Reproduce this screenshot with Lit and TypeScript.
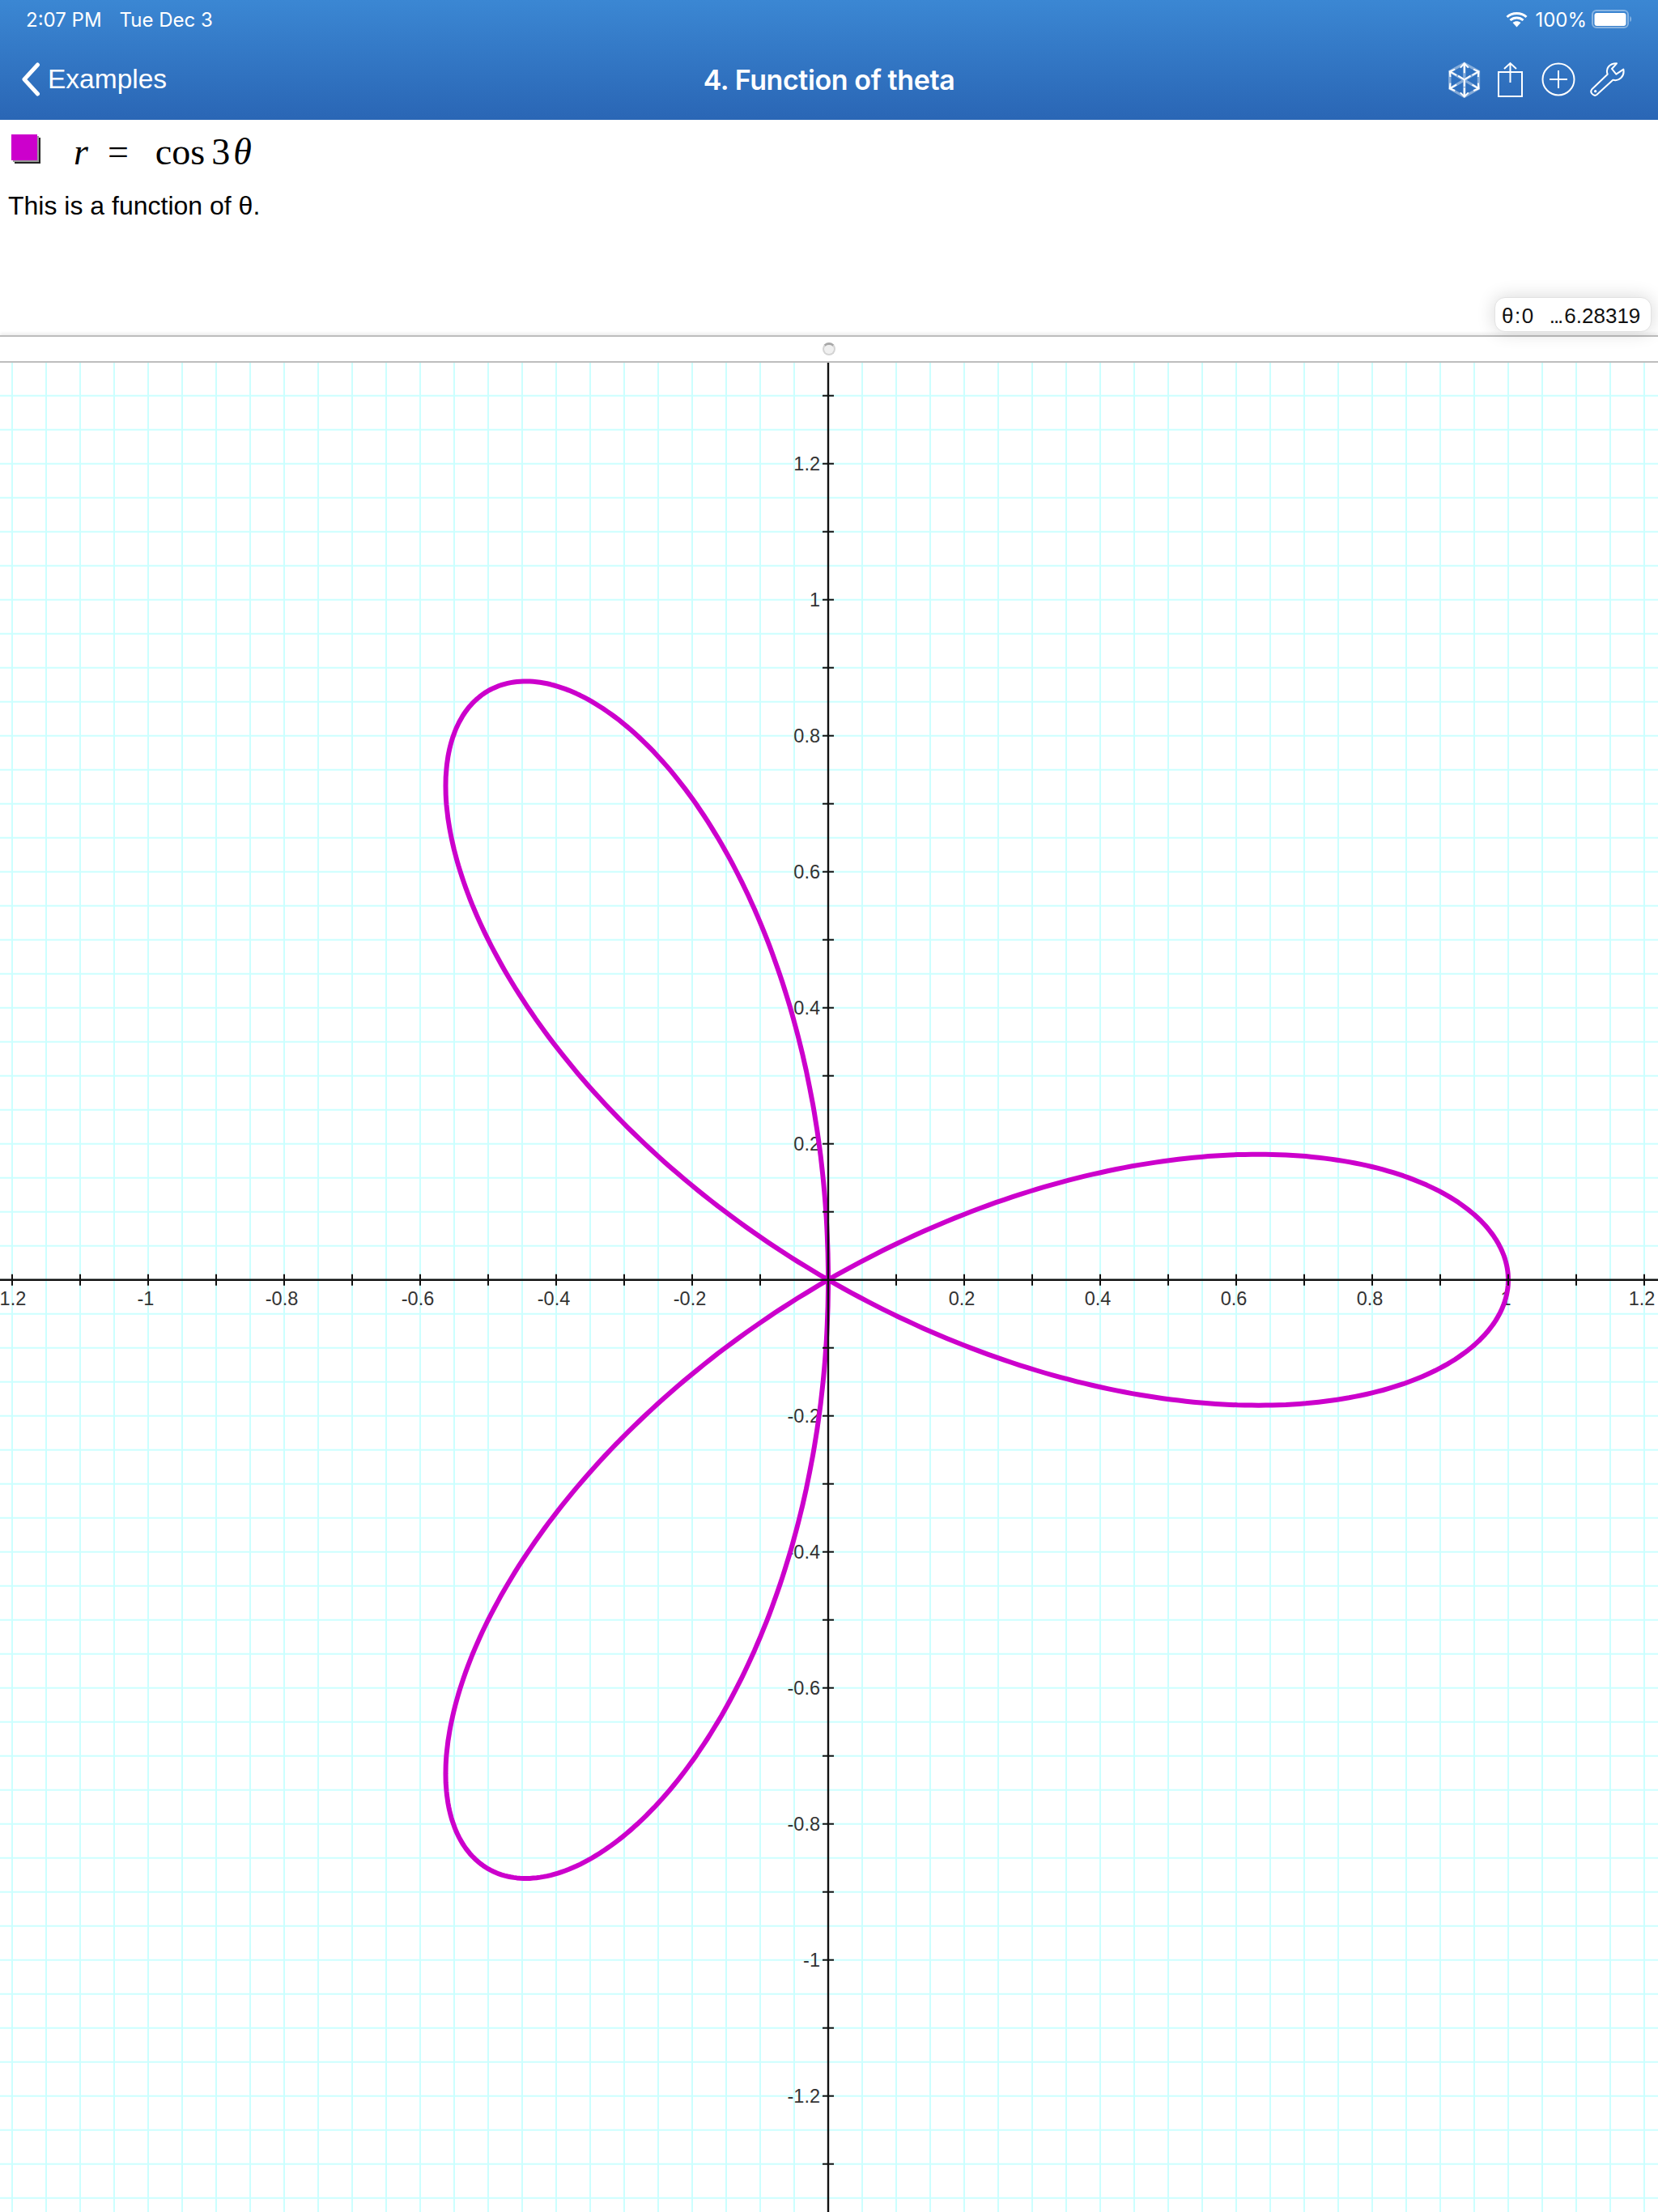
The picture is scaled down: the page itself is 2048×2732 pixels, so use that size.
import { LitElement, html, css, svg } from 'lit'
import { customElement } from 'lit/decorators.js'

const OX = 1023
const OY = 1580.7
const UNIT = 840
const STEP = UNIT / 20

function range(from: number, to: number) {
  const out: number[] = []
  for (let i = from; i <= to; i++) out.push(i)
  return out
}

function rose() {
  const pts: string[] = []
  for (let i = 0; i <= 720; i++) {
    const t = (i / 720) * Math.PI
    const r = Math.cos(3 * t)
    pts.push(`${(OX + UNIT * r * Math.cos(t)).toFixed(1)},${(OY - UNIT * r * Math.sin(t)).toFixed(1)}`)
  }
  return pts.join(' ')
}

function label(n: number) {
  return String(Math.round(n * 10) / 10)
}

@customElement('app-root')
export class AppRoot extends LitElement {
  static styles = css`
    :host {
      display: block;
      width: 2048px;
      height: 2732px;
      overflow: hidden;
      background: #fff;
      font-family: 'Liberation Sans', Arial, sans-serif;
    }
    .header {
      height: 148px;
      box-sizing: border-box;
      color: #fff;
      background: linear-gradient(#3b87d3, #2a66b5);
      font-family: Inter, 'Liberation Sans', sans-serif;
    }
    .status {
      height: 48px;
      padding: 0 32px 0 32px;
      display: flex;
      align-items: center;
      justify-content: space-between;
      font-size: 24px;
    }
    .status .left {
      display: flex;
      gap: 22px;
    }
    .status .right {
      display: flex;
      align-items: center;
    }
    .pct {
      margin: 0 6px 0 9px;
    }
    .nav {
      height: 100px;
      display: grid;
      grid-template-columns: 1fr auto 1fr;
      align-items: center;
      box-sizing: border-box;
    }
    .back {
      display: flex;
      align-items: center;
      gap: 9px;
      padding-left: 26px;
      font-family: 'Liberation Sans', sans-serif;
      font-size: 33.5px;
    }
    .title {
      font-size: 34px;
      font-weight: 600;
      letter-spacing: -0.4px;
    }
    .tools {
      display: flex;
      justify-content: flex-end;
      align-items: center;
      gap: 20px;
      padding-right: 40px;
    }
    .plus {
      margin-left: 3px;
    }
    .wrench {
      margin-left: -3px;
    }
    .panel {
      position: relative;
      height: 266px;
      box-sizing: border-box;
      padding: 18px 0 0 14px;
    }
    .expr {
      display: flex;
      height: 36px;
      align-items: flex-start;
    }
    .swatch {
      width: 32px;
      height: 32px;
      flex: none;
      background: #cc00cc;
      box-shadow: 2px 2px 0 #999, 4px 4px 0 #222;
    }
    .math {
      display: flex;
      flex: none;
      align-items: baseline;
      margin: -5px 0 0 45px;
      font: 46px 'Liberation Serif', 'Times New Roman', serif;
      color: #000;
    }
    .math i {
      font-style: italic;
    }
    .eq {
      margin: 0 33px 0 24px;
    }
    .three {
      margin: 0 4px 0 8px;
    }
    .desc {
      margin: 34px 0 0 -4px;
      font-size: 32px;
      line-height: 37px;
      color: #000;
    }
    .domain {
      position: absolute;
      right: 8px;
      bottom: 4px;
      width: 194px;
      height: 43px;
      box-sizing: border-box;
      padding: 3px 0 0 8px;
      display: flex;
      align-items: center;
      gap: 18px;
      background: #fff;
      border: 1px solid #e2e2e2;
      border-radius: 13px;
      box-shadow: 0 0 22px rgba(0, 0, 0, 0.16);
      font-size: 26px;
      color: #111;
      z-index: 1;
    }
    .domain .var {
      letter-spacing: 1.5px;
    }
    .domain .dots {
      letter-spacing: -2px;
      margin-right: -15px;
    }
    .strip {
      height: 34px;
      box-sizing: border-box;
      border-top: 2px solid #bdbdbd;
      border-bottom: 2px solid #bdbdbd;
      display: flex;
      align-items: center;
      justify-content: center;
      box-shadow: 0 -3px 3px rgba(0, 0, 0, 0.06);
    }
    .handle {
      width: 16px;
      height: 16px;
      box-sizing: border-box;
      border-radius: 50%;
      background: #f0f0f0;
      border: 2px solid #d4d4d4;
      border-top: 3px solid #a8a8a8;
    }
    .graph {
      display: block;
      width: 2048px;
      height: 2284px;
    }
    .graph text {
      font: 23.5px 'Liberation Sans', Arial, sans-serif;
      fill: #333;
    }
  `

  private renderGraph() {
    const vert = range(-25, 25).map(k => OX + k * STEP)
    const horiz = range(-27, 28).map(k => OY - k * STEP)
    const xTicks = range(-12, 12).filter(k => k !== 0)
    const yTicks = range(-13, 13).filter(k => k !== 0)
    return html`<svg class="graph" viewBox="0 448 2048 2284">
      ${vert.map(x => svg`<line x1=${x} x2=${x} y1="448" y2="2732" stroke="#ccffff" stroke-width="2"></line>`)}
      ${horiz.map(y => svg`<line x1="0" x2="2048" y1=${y} y2=${y} stroke="#ccffff" stroke-width="2"></line>`)}
      ${xTicks.filter(k => k % 2 === 0).map(k => svg`<text x=${OX + k * 84 - 3} y="1612" text-anchor="middle">${label(k / 10)}</text>`)}
      ${yTicks.filter(k => k % 2 === 0).map(k => svg`<text x="1013" y=${OY - k * 84 + 8} text-anchor="end">${label(k / 10)}</text>`)}
      <polyline points=${rose()} fill="none" stroke="#cc00cc" stroke-width="6" stroke-linejoin="round"></polyline>
      <line x1="0" x2="2048" y1=${OY} y2=${OY} stroke="#111" stroke-width="2.4"></line>
      <line x1=${OX} x2=${OX} y1="448" y2="2732" stroke="#111" stroke-width="2.4"></line>
      ${xTicks.map(k => svg`<line x1=${OX + k * 84} x2=${OX + k * 84} y1=${OY - 7} y2=${OY + 7} stroke="#111" stroke-width="2"></line>`)}
      ${yTicks.map(k => svg`<line x1=${OX - 7} x2=${OX + 7} y1=${OY - k * 84} y2=${OY - k * 84} stroke="#111" stroke-width="2"></line>`)}
    </svg>`
  }

  render() {
    return html`
      <div class="header">
        <div class="status">
          <div class="left"><span>2:07 PM</span><span>Tue Dec 3</span></div>
          <div class="right">
            <svg width="27" height="20" viewBox="0 0 27 20">
              <path d="M1.5 7 C8 1 19 1 25.5 7 M5.5 11 C10 7 17 7 21.5 11" fill="none" stroke="#fff" stroke-width="3"></path>
              <path d="M8.5 14 C11.5 11.5 15.5 11.5 18.5 14 L13.5 19.5 Z" fill="#fff"></path>
            </svg>
            <span class="pct">100%</span>
            <svg width="50" height="24" viewBox="0 0 50 24">
              <rect x="1" y="1" width="44" height="21" rx="5" fill="none" stroke="#fff" stroke-opacity=".4" stroke-width="2"></rect>
              <rect x="3.5" y="4" width="39" height="16" rx="3" fill="#fff"></rect>
              <path d="M47.5 8 C49.5 9 49.5 14 47.5 15 Z" fill="#fff" fill-opacity=".5"></path>
            </svg>
          </div>
        </div>
        <div class="nav">
          <div class="back">
            <svg width="24" height="42" viewBox="0 0 24 42">
              <path d="M20.5 3 L4 21 L20.5 39" fill="none" stroke="#fff" stroke-width="5" stroke-linecap="round" stroke-linejoin="round"></path>
            </svg>
            <span>Examples</span>
          </div>
          <div class="title">4. Function of theta</div>
          <div class="tools">
            <svg width="42" height="45" viewBox="265 225 125 135" fill="none" stroke="#fff">
              <g stroke-opacity=".42" stroke-width="10">
                <path d="M327 232 L380 262 L380 325 L327 355 L273 325 L273 262 Z"></path>
                <path d="M327 232 L327 355 M273 262 L380 325 M380 262 L273 325"></path>
              </g>
              <g stroke-width="6">
                <path d="M327 292 L327 318 M327 292 L304 278 M327 292 L350 278"></path>
                <path d="M327 232 L327 268 M312 248 L327 232 L342 248"></path>
                <path d="M327 355 L327 322 M312 340 L327 355 L342 340"></path>
                <path d="M273 262 L298 276 M275 282 L273 262 L292 254"></path>
                <path d="M380 262 L356 276 M378 282 L380 262 L361 254"></path>
                <path d="M273 325 L298 311 M275 305 L273 325 L292 333"></path>
                <path d="M380 325 L356 311 M378 305 L380 325 L361 333"></path>
              </g>
            </svg>
            <svg width="31" height="44" viewBox="0 0 31 44" fill="none" stroke="#fff" stroke-width="2">
              <path d="M1 13 L1 43 L30 43 L30 13 Z"></path>
              <path d="M15.5 26 L15.5 2 M8 9 L15.5 2 L23 9"></path>
            </svg>
            <svg class="plus" width="42" height="42" viewBox="0 0 42 42" fill="none" stroke="#fff" stroke-width="2">
              <circle cx="21" cy="21" r="19.5"></circle>
              <path d="M21 10 L21 32 M10 21 L32 21"></path>
            </svg>
            <svg class="wrench" width="45" height="44" viewBox="790 225 135 132" fill="none" stroke="#fff" stroke-width="6" stroke-linejoin="round">
              <path d="M800 328 L858 272 C850 250 865 232 892 232 L874 252 L890 272 L917 254 C922 280 900 300 878 293 L818 348 C808 356 790 340 800 328 Z"></path>
              <circle cx="813" cy="335" r="2" fill="#fff"></circle>
            </svg>
          </div>
        </div>
      </div>
      <div class="panel">
        <div class="expr">
          <div class="swatch"></div>
          <div class="math">
            <i>r</i><span class="eq">=</span><span>cos</span><span class="three">3</span><i>θ</i>
          </div>
        </div>
        <div class="desc">This is a function of θ.</div>
        <div class="domain"><span class="var">θ:0</span><span class="dots">...</span><span>6.28319</span></div>
      </div>
      <div class="strip"><div class="handle"></div></div>
      ${this.renderGraph()}
    `
  }
}
